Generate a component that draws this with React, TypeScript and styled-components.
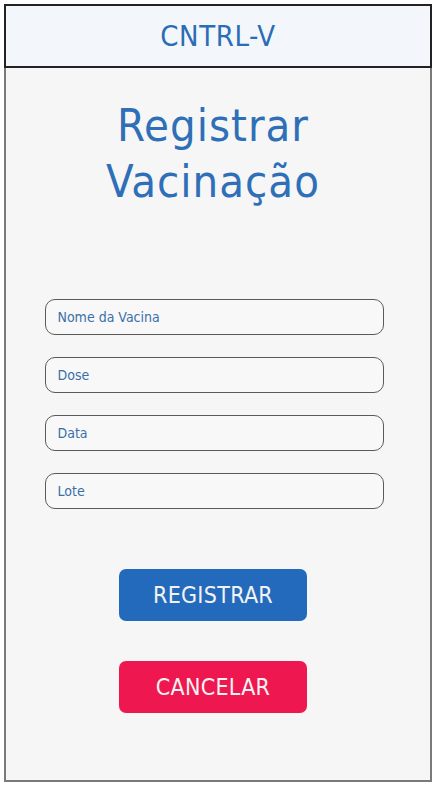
import React from 'react';
import styled, { createGlobalStyle } from 'styled-components';

const GlobalStyle = createGlobalStyle`
  html, body {
    margin: 0;
    padding: 0;
    background: #ffffff;
  }
  body {
    font-family: 'DejaVu Sans Condensed', Roboto, 'Liberation Sans', sans-serif;
  }
`;

const StyledFrame = styled.div`
  box-sizing: border-box;
  width: 428px;
  height: 778px;
  margin: 4px 0 0 4px;
  display: flex;
  flex-direction: column;
  border: 2px solid #7a7a7a;
  background: #f6f6f6;
`;

const StyledHeader = styled.header`
  box-sizing: border-box;
  height: 64px;
  margin: -2px -2px 0;
  display: flex;
  align-items: center;
  justify-content: center;
  border: 2px solid #222222;
  background: #f3f7fc;
  color: #2a6db5;
  font-size: 29px;
  letter-spacing: 0.6px;
`;

const StyledTitle = styled.h1`
  margin: 30px 0 0 -10px;
  text-align: center;
  color: #2f6fb8;
  font-weight: 400;
  font-size: 45px;
  line-height: 56px;
  letter-spacing: 1px;
`;

const StyledForm = styled.form`
  display: flex;
  flex-direction: column;
  align-items: center;
  gap: 22px;
  margin-top: 89px;
`;

const StyledInput = styled.input`
  box-sizing: border-box;
  width: 339px;
  height: 36px;
  margin-left: -8px;
  padding: 0 12px;
  border: 1.5px solid #5a5a5a;
  border-radius: 10px;
  background: #f8f8f8;
  font-family: inherit;
  font-size: 14px;
  outline: none;

  &::placeholder {
    color: #3b6fa8;
  }
`;

const StyledActions = styled.div`
  display: flex;
  flex-direction: column;
  align-items: center;
  gap: 40px;
  margin: 38px 0 0 -10px;
`;

interface StyledButtonProps {
  $variant: 'primary' | 'danger';
}

const StyledButton = styled.button<StyledButtonProps>`
  width: 188px;
  height: 52px;
  border: none;
  border-radius: 7px;
  background: ${({ $variant }) => ($variant === 'primary' ? '#236abd' : '#ef1750')};
  color: #f2f2f2;
  font-family: inherit;
  font-size: 23px;
  letter-spacing: 0.3px;
  cursor: pointer;
`;

const fields = ['Nome da Vacina', 'Dose', 'Data', 'Lote'];

const App = (): JSX.Element => (
  <>
    <GlobalStyle />
    <StyledFrame>
      <StyledHeader>CNTRL-V</StyledHeader>
      <StyledTitle>
        Registrar
        <br />
        Vacinação
      </StyledTitle>
      <StyledForm onSubmit={(e) => e.preventDefault()}>
        {fields.map((field) => (
          <StyledInput key={field} placeholder={field} />
        ))}
        <StyledActions>
          <StyledButton $variant="primary" type="submit">
            REGISTRAR
          </StyledButton>
          <StyledButton $variant="danger" type="button">
            CANCELAR
          </StyledButton>
        </StyledActions>
      </StyledForm>
    </StyledFrame>
  </>
);

export default App;
